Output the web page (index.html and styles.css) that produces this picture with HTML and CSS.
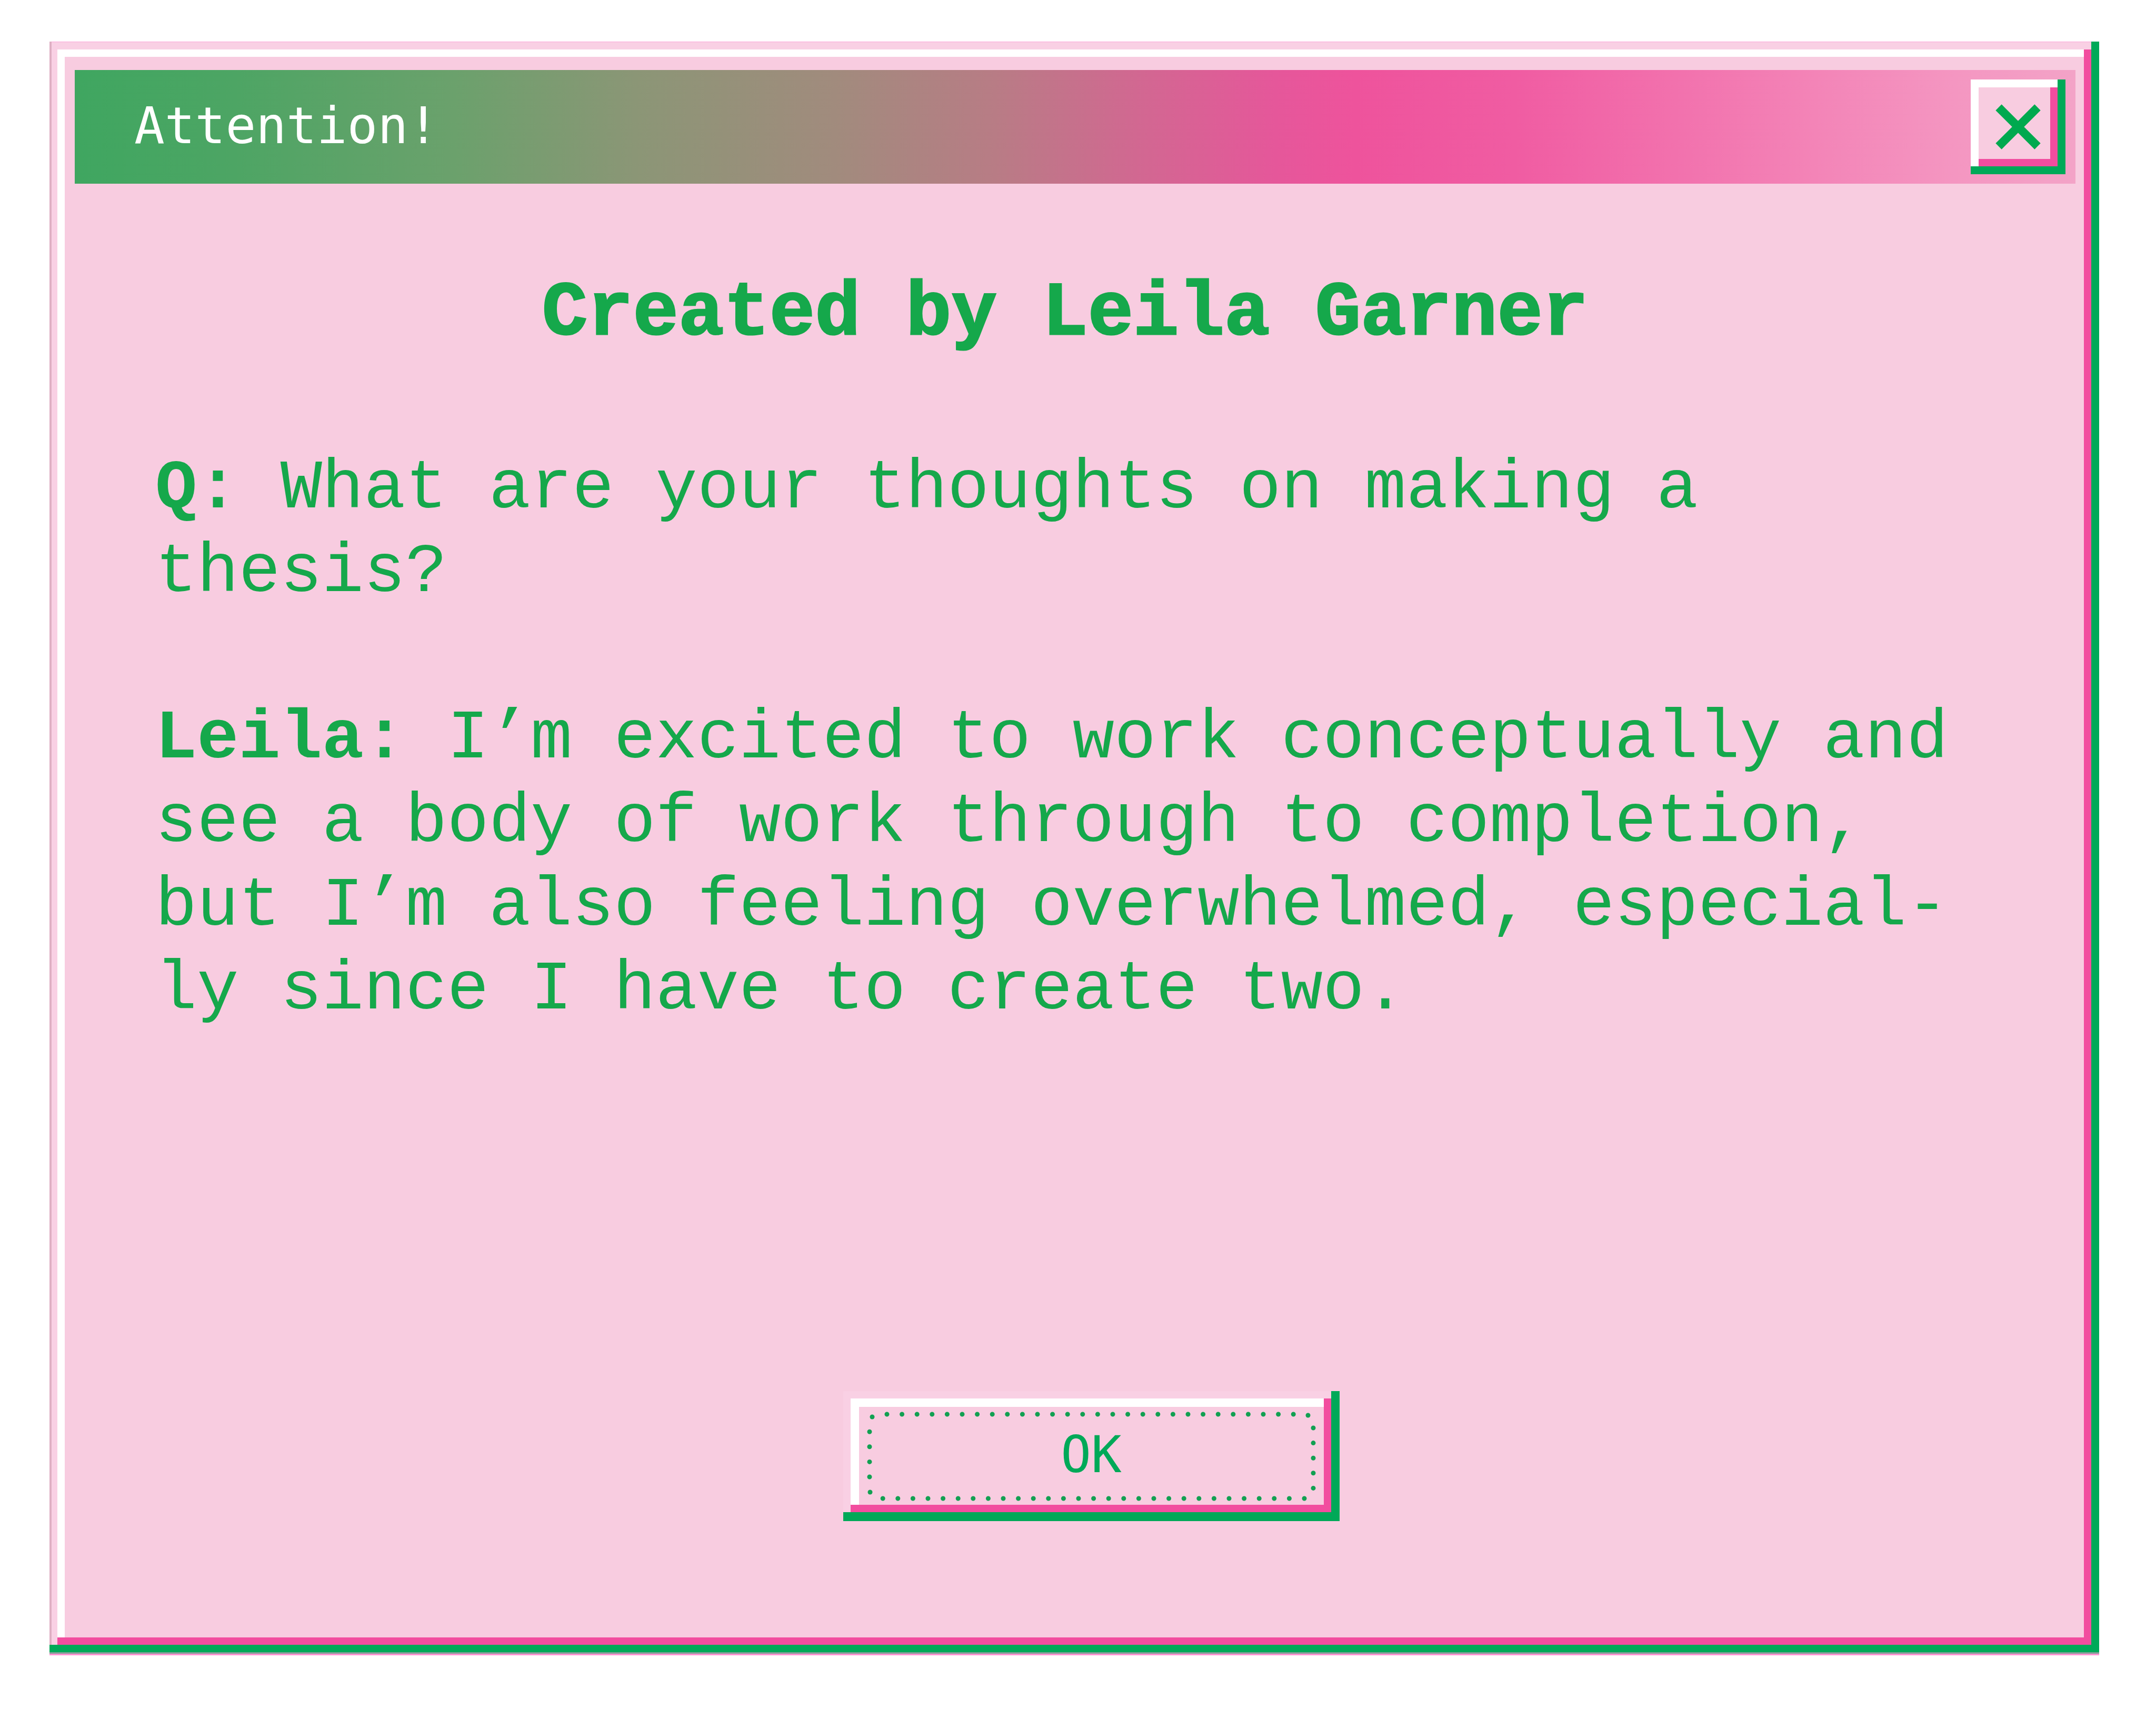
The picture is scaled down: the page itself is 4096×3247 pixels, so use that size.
FILE: index.html
```html
<!DOCTYPE html>
<html lang="en">
<head>
<meta charset="utf-8">
<title>Attention!</title>
<link rel="stylesheet" href="styles.css">
</head>
<body>
<main class="dialog" role="dialog" aria-labelledby="dialog-title">
  <header class="title-bar">
    <span class="title" id="dialog-title">Attention!</span>
    <button class="close" type="button" aria-label="Close">
      <svg class="close-icon" viewBox="0 0 86 86" aria-hidden="true">
        <path d="M6 6 80 80M80 6 6 80" fill="none" stroke="#00a94f" stroke-width="16"/>
      </svg>
    </button>
  </header>
  <article class="content">
    <h1 class="heading">Created by Leila Garner</h1>
    <p class="entry"><b>Q: </b>What are your thoughts on making a thesis?</p>
    <p class="entry"><b>Leila: </b>I’m excited to work conceptually and see a body of work through to completion, but I’m also feeling overwhelmed, especial-<br>ly since I have to create two.</p>
  </article>
  <footer class="actions">
    <button class="ok" type="button">
      <svg class="ok-dots" viewBox="0 0 943 247" aria-hidden="true">
        <g fill="none" stroke="#12a052" stroke-width="9" stroke-linecap="round" stroke-dasharray="0 28.6">
          <path d="M83 44H856"/>
          <path d="M883 46h1"/>
          <path d="M893 70V186"/>
          <path d="M876 204H74"/>
          <path d="M51 192h1"/>
          <path d="M50 163V76"/>
          <path d="M55 49h1"/>
        </g>
      </svg>
      OK
    </button>
  </footer>
</main>
</body>
</html>
```
FILE: styles.css
```css
:root {
  --pink: #f8cce0;
  --pale: #f9d0e4;
  --magenta: #f24d9f;
  --green: #00a958;
  --ink: #15a84b;
}

* {
  box-sizing: border-box;
}

body {
  display: flex;
  min-height: 100vh;
  margin: 0;
  padding: 79px 108px 105px 94px;
  background: #fff;
  color: var(--ink);
}

.dialog {
  display: flex;
  flex: 1;
  flex-direction: column;
  padding: 54px 45px 252px 48px;
  background: var(--pink);
  box-shadow:
    inset 0 -3px #7f9f97,
    inset -15px -17px var(--green),
    inset 4px 0 #dfafc3,
    inset 0 1px #fda6d8,
    inset 15px 15px var(--pale),
    inset -29px -31px var(--magenta),
    inset 29px 29px #fff,
    0 3px #ff93d3;
}

.title-bar {
  display: flex;
  align-items: center;
  justify-content: space-between;
  height: 216px;
  padding: 0 19px 0 113px;
  background: linear-gradient(90deg,
    #3fa660 0%, #4da564 8%, #6ba16c 19%, #8b9676 28%, #a18b7d 38%,
    #b87c85 46%, #d16891 53%, #e5579a 60%, #ee539c 64%, #f05ca2 72%,
    #f271ad 80%, #f384b7 87%, #f496c1 94%, #f3a3c7 100%);
}

.title {
  padding-bottom: 4px;
  color: #fff;
  font: 96px/120px "DejaVu Sans Mono", monospace;
}

.close {
  display: grid;
  place-items: center;
  width: 180px;
  height: 180px;
  padding: 0;
  border: 0;
  background: var(--pink);
  box-shadow:
    inset -15px -15px var(--green),
    inset 15px 15px #fff,
    inset -29px -29px var(--magenta);
}

.close-icon {
  width: 86px;
  height: 86px;
}

.content {
  flex: 1;
  padding: 168px 191px 0 153px;
  font-family: "Liberation Mono", monospace;
}

.heading {
  margin: 0 0 173px;
  font-size: 144px;
  line-height: 160px;
  text-align: center;
  -webkit-text-stroke: 3px currentColor;
}

.entry {
  margin: 0 0 157px;
  font-size: 132px;
  line-height: 159px;
}

.actions {
  display: flex;
  justify-content: center;
  padding-left: 61px;
}

.ok {
  position: relative;
  width: 943px;
  height: 247px;
  padding: 0 0 6px;
  border: 0;
  background: var(--pink);
  box-shadow:
    inset -16px -17px var(--green),
    inset 14px 14px var(--pale),
    inset -30px -31px var(--magenta),
    inset 30px 30px #fff;
  color: var(--green);
  font: 96px/120px "DejaVu Sans Mono", monospace;
}

.ok-dots {
  position: absolute;
  inset: 0;
  width: 100%;
  height: 100%;
}
```
